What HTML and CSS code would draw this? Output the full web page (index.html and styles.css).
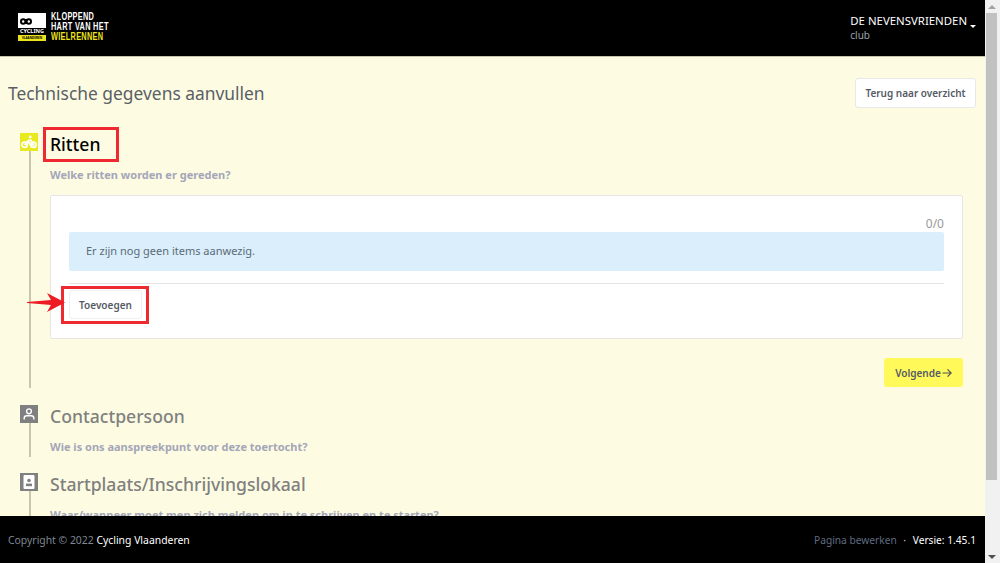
FILE: index.html
```html
<!DOCTYPE html>
<html lang="nl">
<head>
    <meta charset="UTF-8">
    <title>Technische gegevens aanvullen</title>
    <link rel="stylesheet" href="styles.css">
</head>
<body>
    <div class="app">
        <header class="topbar">
            <div class="logo">
                <div class="logo-mark">
                    <div class="logo-white">
                        <svg class="logo-chain" width="12" height="7" viewBox="0 0 12 7"><rect x="3" y="1" width="6" height="5" fill="#000"/><circle cx="3.2" cy="3.5" r="2.2" fill="#fff" stroke="#000" stroke-width="2"/><circle cx="8.8" cy="3.5" r="2.2" fill="#fff" stroke="#000" stroke-width="2"/></svg>
                    </div>
                    <div class="logo-cycling">CYCLING</div>
                    <div class="logo-vl">VLAANDEREN</div>
                </div>
                <div class="logo-text">
                    <span>KLOPPEND</span>
                    <span>HART VAN HET</span>
                    <span class="logo-yellow">WIELRENNEN</span>
                </div>
            </div>
            <div class="account">
                <div class="account-name">DE NEVENSVRIENDEN <span class="caret"></span></div>
                <div class="account-role">club</div>
            </div>
        </header>

        <main class="content">
            <div class="page-head">
                <h1>Technische gegevens aanvullen</h1>
                <a class="btn btn-white">Terug naar overzicht</a>
            </div>

            <section class="step step-active">
                <div class="step-rail">
                    <div class="step-icon">
                        <svg width="16" height="14" viewBox="0 0 16 14" fill="none" stroke="#fff" stroke-width="1.8"><circle cx="3.6" cy="9.8" r="2.6"/><circle cx="12.4" cy="9.8" r="2.6"/><path d="M3.6 9.8 7 6l2.4 3.8h3L10 5.4H7"/><circle cx="9.2" cy="2" r="1.4" fill="#fff" stroke="none"/></svg>
                    </div>
                    <div class="step-line"></div>
                </div>
                <div class="step-body">
                    <h2>Ritten</h2>
                    <p class="step-sub">Welke ritten worden er gereden?</p>
                    <div class="card">
                        <div class="counter">0/0</div>
                        <div class="alert">Er zijn nog geen items aanwezig.</div>
                        <hr class="divider">
                        <a class="btn btn-add">Toevoegen</a>
                    </div>
                    <div class="step-actions">
                        <a class="btn btn-yellow">Volgende
                            <svg width="10" height="10" viewBox="0 0 10 10" fill="none" stroke="#555" stroke-width="1.2"><path d="M0.5 5h8.5M5.5 1.3 9.2 5 5.5 8.7"/></svg>
                        </a>
                    </div>
                </div>
            </section>

            <section class="step">
                <div class="step-rail">
                    <div class="step-icon step-icon-grey">
                        <svg width="12" height="12" viewBox="0 0 12 12" fill="none" stroke="#fff" stroke-width="1.4"><circle cx="6" cy="3.3" r="2.4"/><path d="M1.2 11.5V10c0-1.5 1.2-2.2 2.4-2.2h4.8c1.2 0 2.4.7 2.4 2.2v1.5"/></svg>
                    </div>
                    <div class="step-line"></div>
                </div>
                <div class="step-body">
                    <h2>Contactpersoon</h2>
                    <p class="step-sub">Wie is ons aanspreekpunt voor deze toertocht?</p>
                </div>
            </section>

            <section class="step">
                <div class="step-rail">
                    <div class="step-icon step-icon-grey">
                        <svg width="12" height="14" viewBox="0 0 12 14"><rect x="0.5" y="0" width="11" height="14" rx="1" fill="#fff"/><circle cx="6" cy="5.5" r="1.8" fill="#808080"/><rect x="3" y="8.6" width="6" height="2.6" fill="#808080"/></svg>
                    </div>
                    <div class="step-line"></div>
                </div>
                <div class="step-body">
                    <h2>Startplaats/Inschrijvingslokaal</h2>
                    <p class="step-sub">Waar/wanneer moet men zich melden om in te schrijven en te starten?</p>
                </div>
            </section>

            <div class="note-box note-title"></div>
            <div class="note-box note-button"></div>
            <svg class="note-arrow" width="38" height="19" viewBox="0 0 38 19"><path d="M0 9 24 7 20 0 38 9.5 20 19 24 12 0 10Z" fill="#ed1c24"/></svg>
        </main>

        <footer class="footer">
            <div>Copyright © 2022 <span class="footer-strong">Cycling Vlaanderen</span></div>
            <div class="footer-right"><span class="footer-link">Pagina bewerken</span> <span class="footer-dot">·</span> <span class="footer-strong">Versie: 1.45.1</span></div>
        </footer>
    </div>

    <div class="scrollbar">
        <div class="scroll-btn"><span class="arrow-up"></span></div>
        <div class="scroll-track"><div class="scroll-thumb"></div></div>
        <div class="scroll-btn"><span class="arrow-down"></span></div>
    </div>
</body>
</html>
```

FILE: styles.css
```css
* {
    box-sizing: border-box;
}
html, body {
    height: 100%;
    margin: 0;
    overflow: hidden;
}
body {
    display: flex;
    font-family: "Noto Sans", "Open Sans", sans-serif;
    font-size: 13px;
    color: #555;
    background-color: #fdfce2;
}
.app {
    flex: 1;
    min-width: 0;
    display: flex;
    flex-direction: column;
}

/* header */
.topbar {
    height: 57px;
    flex: none;
    display: flex;
    justify-content: space-between;
    background-color: #000;
    border-bottom: 1px solid #c5c4ad;
    padding: 13px 9px 0 18px;
}
.logo {
    display: flex;
    gap: 5px;
}
.logo-mark {
    width: 28px;
    height: 28px;
    display: flex;
    flex-direction: column;
}
.logo-white {
    height: 15px;
    background-color: #fff;
    padding: 5px 0 0 2px;
}
.logo-chain {
    display: block;
}
.logo-cycling {
    height: 7px;
    font-size: 5.5px;
    line-height: 7px;
    text-align: center;
    color: #fff;
    font-weight: 700;
}
.logo-vl {
    height: 6px;
    font-size: 3px;
    line-height: 6px;
    text-align: center;
    color: #000;
    font-weight: 700;
    background-color: #ece31c;
}
.logo-text {
    display: flex;
    flex-direction: column;
    margin-top: -1px;
    font-family: "Liberation Sans", sans-serif;
    font-size: 10px;
    letter-spacing: 0.4px;
    line-height: 10px;
    font-weight: 700;
    color: #fff;
    white-space: nowrap;
    transform: scaleX(0.735);
    transform-origin: left center;
}
.logo-yellow {
    color: #f0e61e;
}
.account-name {
    font-size: 11.4px;
    line-height: 16px;
    color: #fff;
    white-space: nowrap;
}
.caret {
    display: inline-block;
    width: 0;
    height: 0;
    vertical-align: -3px;
    border-top: 3px solid #fff;
    border-left: 3px solid transparent;
    border-right: 3px solid transparent;
}
.account-role {
    font-size: 10px;
    line-height: 14px;
    margin-top: -1px;
    color: #9aa3ad;
}

/* main */
.content {
    position: relative;
    flex: 1;
    min-height: 0;
    overflow: hidden;
    padding: 21px 9px 0 8px;
}
.page-head {
    display: flex;
    justify-content: space-between;
    align-items: center;
    margin-bottom: 25px;
}
h1 {
    margin: 0;
    font-size: 17.4px;
    font-weight: 400;
    line-height: 30px;
    color: #5a5f66;
}
.btn {
    display: inline-flex;
    align-items: center;
    justify-content: center;
    font-size: 10px;
    font-weight: 600;
    border-radius: 3px;
    color: #555b66;
    white-space: nowrap;
}
.btn-white {
    width: 121px;
    height: 30px;
    background-color: #fff;
    border: 1px solid #e8e8e8;
}
.step {
    display: flex;
    margin: 0 0 16px 12px;
}
.step-active {
    margin-bottom: 17px;
}
.step-rail {
    width: 30px;
    flex: none;
    display: flex;
    flex-direction: column;
    align-items: flex-start;
}
.step-icon {
    width: 18px;
    height: 18px;
    display: flex;
    align-items: center;
    justify-content: center;
    background-color: #e9e91f;
}
.step-icon-grey {
    background-color: #808080;
}
.step-line {
    flex: 1;
    width: 2px;
    margin-left: 9px;
    background-color: #c8c7ae;
}
.step-body {
    flex: 1;
    min-width: 0;
    padding-right: 13px;
}
h2 {
    margin: -4px 0 0;
    font-size: 17.6px;
    line-height: 30px;
    font-weight: 500;
    color: #808080;
}
.step-active h2 {
    color: #000;
}
.step-sub {
    margin: 6px 0 0;
    height: 20px;
    font-size: 11px;
    line-height: 20px;
    font-weight: 700;
    color: #a4a6b8;
    white-space: nowrap;
}
.card {
    height: 144px;
    margin-top: 10px;
    padding: 20px 18px 0 18px;
    background-color: #fff;
    border: 1px solid #e6e6e6;
    border-radius: 2px;
}
.counter {
    height: 16px;
    font-size: 12px;
    line-height: 16px;
    text-align: right;
    color: #999;
}
.alert {
    height: 39px;
    padding: 0 17px;
    font-size: 11px;
    line-height: 38px;
    border-radius: 2px;
    color: #5a6b78;
    background-color: #dbeefb;
}
.divider {
    margin: 12px 0 6px;
    border: 0;
    border-top: 1px solid #e3e3e3;
}
.btn-add {
    width: 73px;
    height: 29px;
    background-color: #fff;
    border: 1px solid #eeeef3;
}
.step-actions {
    display: flex;
    justify-content: flex-end;
    margin-top: 19px;
    padding-bottom: 1px;
}
.btn-yellow {
    gap: 1px;
    width: 79px;
    height: 29px;
    background-color: #fff95a;
}

/* red annotations */
.note-box {
    position: absolute;
    border: 3px solid #ee2a30;
}
.note-title {
    left: 43px;
    top: 70px;
    width: 76px;
    height: 35px;
}
.note-button {
    left: 61px;
    top: 229px;
    width: 88px;
    height: 38px;
}
.note-arrow {
    position: absolute;
    left: 27px;
    top: 236px;
}

/* footer */
.footer {
    height: 47px;
    flex: none;
    display: flex;
    justify-content: space-between;
    align-items: center;
    padding: 0 9px 0 8px;
    font-size: 10.4px;
    color: #7f8894;
    background-color: #000;
}
.footer-right {
    font-size: 10.2px;
}
.footer-strong {
    color: #fff;
}
.footer-link {
    color: #5f6b80;
}
.footer-dot {
    margin: 0 4px;
    color: #ccc;
}

/* scrollbar */
.scrollbar {
    width: 15px;
    flex: none;
    display: flex;
    flex-direction: column;
    padding: 0 3px 0 1px;
    background-color: #f1f1f1;
}
.scroll-btn {
    height: 13px;
    flex: none;
    display: flex;
    align-items: center;
    justify-content: center;
}
.arrow-up {
    border-bottom: 4px solid #a3a3a3;
    border-left: 4px solid transparent;
    border-right: 4px solid transparent;
}
.arrow-down {
    border-top: 4px solid #505050;
    border-left: 4px solid transparent;
    border-right: 4px solid transparent;
}
.scroll-track {
    flex: 1;
}
.scroll-thumb {
    height: 467px;
    background-color: #c1c1c1;
}
```
